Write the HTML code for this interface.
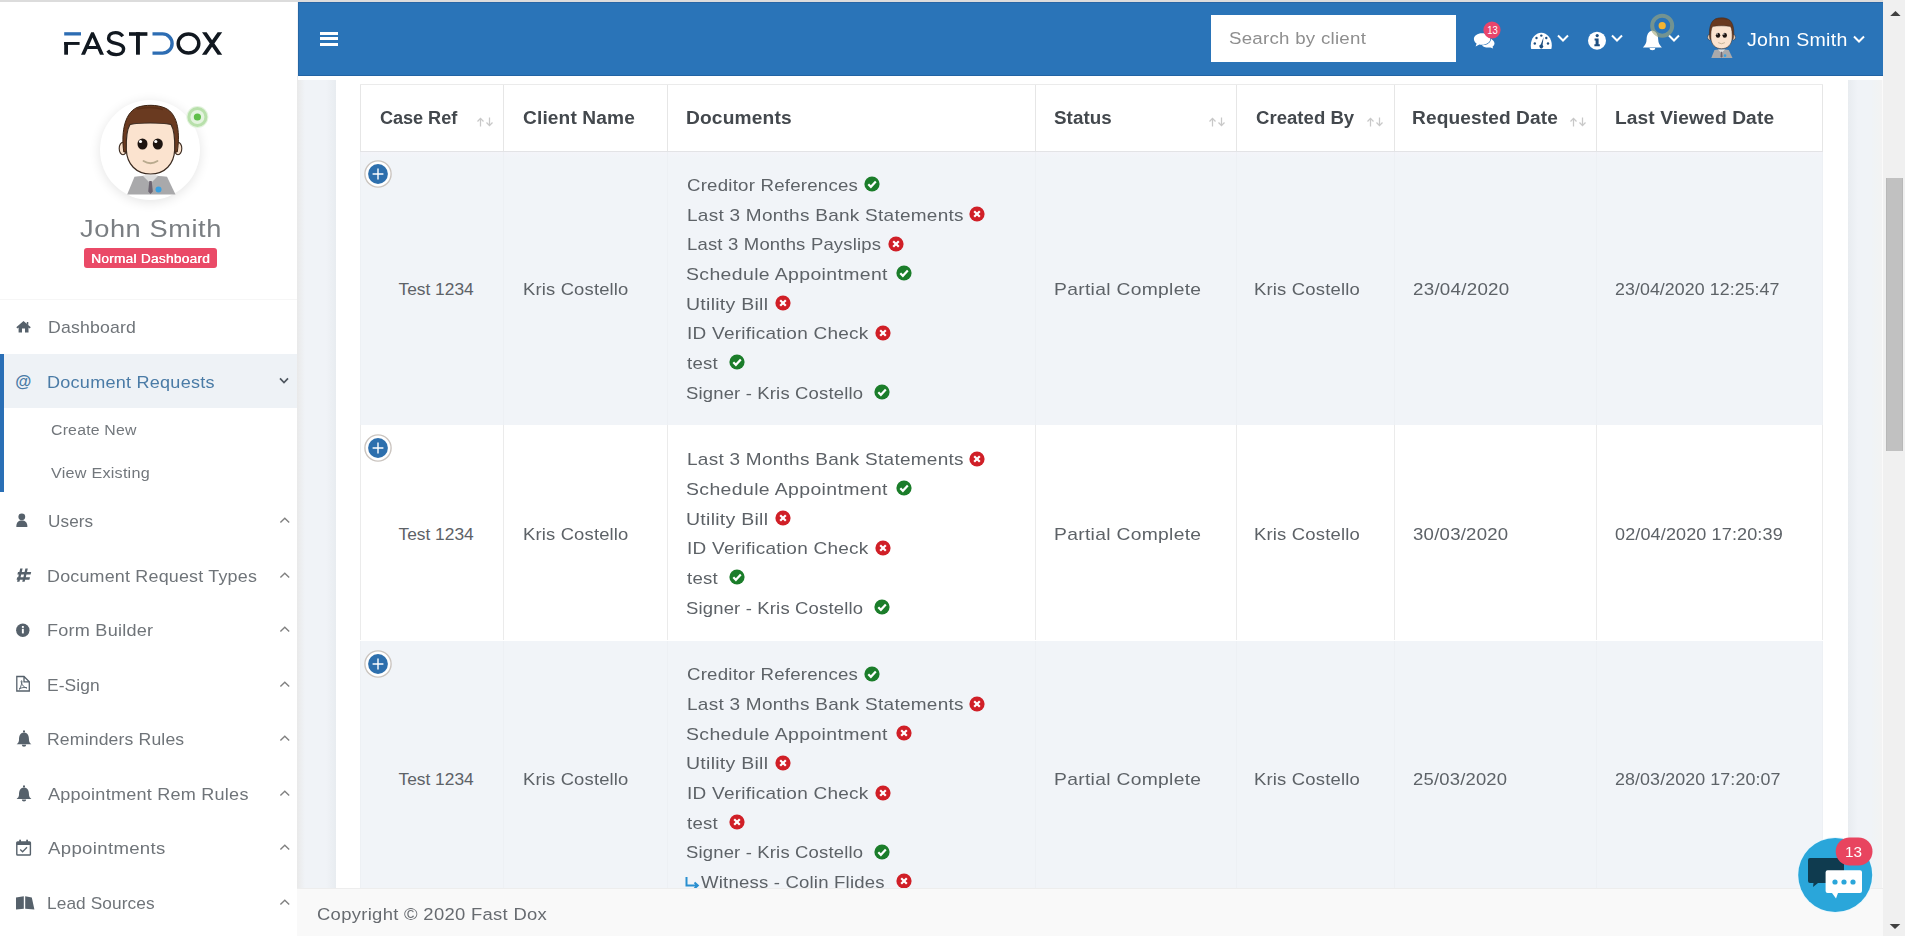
<!DOCTYPE html><html><head><meta charset="utf-8"><style>
*{margin:0;padding:0;box-sizing:border-box}
html,body{width:1905px;height:947px;overflow:hidden;background:#fff;font-family:"Liberation Sans",sans-serif}
.a{position:absolute}
.t{position:absolute;white-space:pre;line-height:20px;font-family:"Liberation Sans",sans-serif}
</style></head><body><div class="a" style="left:0;top:0;width:1905px;height:2px;background:#dcdcdc"></div><div class="a" style="left:297px;top:2px;width:1588px;height:933px;background:#f0f3f7"></div><div class="a" style="left:297px;top:76px;width:8px;height:812px;background:linear-gradient(to right,#e9e9e9,#f0f3f7)"></div><div class="a" style="left:326px;top:76px;width:10px;height:812px;background:linear-gradient(to right,#f0f3f7,#e8ecf0)"></div><div class="a" style="left:1848px;top:76px;width:10px;height:812px;background:linear-gradient(to left,#f0f3f7,#e8ecf0)"></div><div class="a" style="left:336px;top:76px;width:1512px;height:812px;background:#fff"></div><div class="a" style="left:0;top:2px;width:297px;height:945px;background:#fff"></div><div class="a" style="left:0;top:299px;width:297px;height:1px;background:#f6f6f6"></div><svg class="a" style="left:0;top:0" width="297" height="80" viewBox="0 0 297 80">
<rect x="64.2" y="32.2" width="16.8" height="3.3" fill="#2d6db3"/>
<rect x="64.2" y="42" width="15.4" height="2.9" fill="#111820"/>
<rect x="64.2" y="42" width="3.8" height="12.7" fill="#111820"/>
<path d="M81 54.7 L91.2 32.2 L93.8 32.2 L104 54.7 L100 54.7 L92.5 37.5 L85 54.7 Z" fill="#111820"/>
<rect x="86.5" y="46" width="12" height="3" fill="#111820"/>
<path d="M122.8 36.3 C121 33.8 118.4 32.6 115.6 32.6 C111.4 32.6 108.6 34.9 108.6 38.2 C108.6 45.2 123.6 41.6 123.6 49 C123.6 52.5 120.3 54.6 116.2 54.6 C112.4 54.6 109.4 53 107.8 50.5" fill="none" stroke="#111820" stroke-width="3.4"/>
<rect x="129" y="32.2" width="18.4" height="3.6" fill="#111820"/>
<rect x="136" y="32.2" width="3.9" height="22.5" fill="#111820"/>
<path d="M152.5 33.9 H162.5 A9.6 9.6 0 0 1 162.5 53.1 H152.5" fill="none" stroke="#2d6db3" stroke-width="3.4"/>
<ellipse cx="188.5" cy="43.5" rx="10.3" ry="9.6" fill="none" stroke="#111820" stroke-width="3.5"/>
<path d="M202 32.2 L206.6 32.2 L222.2 54.7 L217.6 54.7 Z M217.6 32.2 L222.2 32.2 L206.5 54.7 L201.9 54.7 Z" fill="#111820"/>
</svg><div class="a" style="left:100px;top:100px;width:100px;height:100px;border-radius:50%;background:#fff;box-shadow:0 2px 12px rgba(0,0,0,0.11)"></div><svg class="a" style="left:100px;top:95px" width="110" height="110" viewBox="100 95 110 110"><path d="M134.5 176.8 C140 176 145 175.8 150.5 175.8 C156 175.8 161 176 167 176.8 L175.5 194.5 L127.2 194.5 Z" fill="#a9a9ab"/>
<path d="M142.5 175.5 L150.5 183.5 L158.5 175.5 Z" fill="#dcdcdc"/>
<path d="M149.3 181 L151.7 181 L152.8 191.5 L150.5 194 L148.2 191.5 Z" fill="#6c6470"/>
<circle cx="158.5" cy="189.5" r="3" fill="#3aa0e0"/>
<ellipse cx="123" cy="148.5" rx="3.8" ry="6.2" fill="#f9e0ca" stroke="#3a2a20" stroke-width="1.1"/>
<ellipse cx="178" cy="148.5" rx="3.8" ry="6.2" fill="#f9e0ca" stroke="#3a2a20" stroke-width="1.1"/>
<path d="M123.8 152 C121.5 136 123 114 137 107.5 C145 104.5 157 104.5 165 108 C179 114 180 136 177.2 152 Z" fill="#6a3a20" stroke="#3a2212" stroke-width="1"/>
<path d="M126.3 150 C126 140 126.5 130 130 124.5 C140 122.5 160 122.5 171 124.5 C174.5 130 175 140 174.7 150 C174 164 165 174 150.5 174 C136 174 127 164 126.3 150 Z" fill="#fbe3cf" stroke="#3a2a20" stroke-width="1.2"/>
<path d="M137 109 C145 107 155 107 163 109.5" fill="none" stroke="#5a3018" stroke-width="1.5"/>
<ellipse cx="142.5" cy="144" rx="5" ry="5.6" fill="#1d1410"/>
<ellipse cx="157.8" cy="144" rx="5" ry="5.6" fill="#1d1410"/>
<circle cx="140.5" cy="141.5" r="1.6" fill="#fff"/>
<circle cx="155.8" cy="141.5" r="1.6" fill="#fff"/>
<path d="M143.5 161 Q150.5 165.5 157.5 161" fill="none" stroke="#b9aa8e" stroke-width="1.8" stroke-linecap="round"/>
<circle cx="197.4" cy="117" r="11" fill="#e4f3df"/>
<circle cx="197.4" cy="117" r="8.5" fill="none" stroke="#b8e0ab" stroke-width="3"/>
<circle cx="197.4" cy="117" r="3.6" fill="#5fbf4a"/>
</svg><div class="t" style="left:80.00px;top:218.62px;font-size:24.18px;letter-spacing:0.498px;color:#7a7e82;font-weight:normal;transform:scaleX(1.1268);transform-origin:0 0;">John Smith</div><div class="a" style="left:84px;top:248px;width:133px;height:20px;border-radius:3px;background:#ea4a67"></div><div class="t" style="left:90.90px;top:248.66px;font-size:12.52px;letter-spacing:0.206px;color:#fff;font-weight:normal;transform:scaleX(1.0977);transform-origin:0 0;text-shadow:0.35px 0 0 #fff">Normal Dashboard</div><div class="a" style="left:0;top:354px;width:297px;height:54px;background:#eef2f6"></div><div class="a" style="left:0;top:354px;width:4px;height:138px;background:#2a6fb6"></div><div class="t" style="left:47.75px;top:318.18px;font-size:16.78px;letter-spacing:0.172px;color:#6f7479;font-weight:normal;transform:scaleX(1.0540);transform-origin:0 0;">Dashboard</div><div class="t" style="left:47.02px;top:372.58px;font-size:16.78px;letter-spacing:0.225px;color:#4a7ba6;font-weight:normal;transform:scaleX(1.0772);transform-origin:0 0;">Document Requests</div><svg class="a" style="left:279px;top:376.7px" width="12" height="8" viewBox="0 0 12 8"><path d="M1 1.3 L5 5.5 L9 1.3" fill="none" stroke="#4f5760" stroke-width="1.7"/></svg><div class="t" style="left:47.78px;top:511.98px;font-size:16.78px;letter-spacing:0.080px;color:#6f7479;font-weight:normal;transform:scaleX(1.0230);transform-origin:0 0;">Users</div><svg class="a" style="left:279px;top:516.8px" width="12" height="7" viewBox="0 0 12 7"><path d="M1.4 5.5 L5.8 1.3 L10.2 5.5" fill="none" stroke="#808080" stroke-width="1.4"/></svg><div class="t" style="left:47.03px;top:566.68px;font-size:16.78px;letter-spacing:0.192px;color:#6f7479;font-weight:normal;transform:scaleX(1.0673);transform-origin:0 0;">Document Request Types</div><svg class="a" style="left:279px;top:571.5px" width="12" height="7" viewBox="0 0 12 7"><path d="M1.4 5.5 L5.8 1.3 L10.2 5.5" fill="none" stroke="#808080" stroke-width="1.4"/></svg><div class="t" style="left:47.22px;top:621.38px;font-size:16.78px;letter-spacing:0.211px;color:#6f7479;font-weight:normal;transform:scaleX(1.0788);transform-origin:0 0;">Form Builder</div><svg class="a" style="left:279px;top:626.2px" width="12" height="7" viewBox="0 0 12 7"><path d="M1.4 5.5 L5.8 1.3 L10.2 5.5" fill="none" stroke="#808080" stroke-width="1.4"/></svg><div class="t" style="left:47.26px;top:675.98px;font-size:16.78px;letter-spacing:0.116px;color:#6f7479;font-weight:normal;transform:scaleX(1.0368);transform-origin:0 0;">E-Sign</div><svg class="a" style="left:279px;top:680.8px" width="12" height="7" viewBox="0 0 12 7"><path d="M1.4 5.5 L5.8 1.3 L10.2 5.5" fill="none" stroke="#808080" stroke-width="1.4"/></svg><div class="t" style="left:47.25px;top:730.48px;font-size:16.78px;letter-spacing:0.145px;color:#6f7479;font-weight:normal;transform:scaleX(1.0501);transform-origin:0 0;">Reminders Rules</div><svg class="a" style="left:279px;top:735.3px" width="12" height="7" viewBox="0 0 12 7"><path d="M1.4 5.5 L5.8 1.3 L10.2 5.5" fill="none" stroke="#808080" stroke-width="1.4"/></svg><div class="t" style="left:48.30px;top:784.78px;font-size:16.78px;letter-spacing:0.217px;color:#6f7479;font-weight:normal;transform:scaleX(1.0772);transform-origin:0 0;">Appointment Rem Rules</div><svg class="a" style="left:279px;top:789.6px" width="12" height="7" viewBox="0 0 12 7"><path d="M1.4 5.5 L5.8 1.3 L10.2 5.5" fill="none" stroke="#808080" stroke-width="1.4"/></svg><div class="t" style="left:48.30px;top:839.08px;font-size:16.78px;letter-spacing:0.303px;color:#6f7479;font-weight:normal;transform:scaleX(1.1084);transform-origin:0 0;">Appointments</div><svg class="a" style="left:279px;top:843.9px" width="12" height="7" viewBox="0 0 12 7"><path d="M1.4 5.5 L5.8 1.3 L10.2 5.5" fill="none" stroke="#808080" stroke-width="1.4"/></svg><div class="t" style="left:47.27px;top:893.88px;font-size:16.78px;letter-spacing:0.091px;color:#6f7479;font-weight:normal;transform:scaleX(1.0303);transform-origin:0 0;">Lead Sources</div><svg class="a" style="left:279px;top:898.7px" width="12" height="7" viewBox="0 0 12 7"><path d="M1.4 5.5 L5.8 1.3 L10.2 5.5" fill="none" stroke="#808080" stroke-width="1.4"/></svg><div class="t" style="left:51.00px;top:420.17px;font-size:14.79px;letter-spacing:0.193px;color:#72777c;font-weight:normal;transform:scaleX(1.0711);transform-origin:0 0;">Create New</div><div class="t" style="left:51.00px;top:463.07px;font-size:14.79px;letter-spacing:0.209px;color:#72777c;font-weight:normal;transform:scaleX(1.0943);transform-origin:0 0;">View Existing</div><svg class="a" style="left:0;top:300px" width="40" height="647" viewBox="0 300 40 647">
<g fill="#56616b">
<path d="M23.5 321 L30.8 327.3 L29.6 328.6 L28.5 327.6 L28.5 332.4 L25 332.4 L25 328.5 L22 328.5 L22 332.4 L18.6 332.4 L18.6 327.6 L17.5 328.6 L16.3 327.3 Z M26.8 322 L28.3 322 L28.3 325 L26.8 323.7 Z"/>
<path d="M16.3 527 C16.3 522 18.5 520.5 21.8 520.5 C25.1 520.5 27.4 522 27.4 527 Z"/>
<ellipse cx="21.8" cy="516.8" rx="3.4" ry="3.4"/>
<path d="M20.2 568.5 L22.6 568.5 L21.8 572 L24.6 572 L25.4 568.5 L27.8 568.5 L27 572 L31.2 572 L30.6 574.6 L26.4 574.6 L25.8 577.2 L30 577.2 L29.4 579.8 L25.2 579.8 L24.6 581.7 L22.2 581.7 L22.8 579.8 L20 579.8 L19.4 581.7 L17 581.7 L17.6 579.8 L16.6 579.8 L17.2 577.2 L18.2 577.2 L18.8 574.6 L17.4 574.6 L18 572 L19.4 572 Z M21.2 574.6 L20.6 577.2 L23.4 577.2 L24 574.6 Z"/>
<circle cx="22.8" cy="630.2" r="6.7"/>
<path d="M24 732.6 C19.8 732.6 19 736.5 19 740 C19 742 18 743.2 16.6 744.3 L31.4 744.3 C30 743.2 29 742 29 740 C29 736.5 28.2 732.6 24 732.6 Z M23 730.6 L25 730.6 L25 733 L23 733 Z M21.8 744.8 L26.2 744.8 A2.2 2 0 0 1 21.8 744.8 Z"/>
<path d="M24 787.4 C19.8 787.4 19 791.3 19 794.8 C19 796.8 18 797.9 16.6 799 L31.4 799 C30 797.9 29 796.8 29 794.8 C29 791.3 28.2 787.4 24 787.4 Z M23 785.4 L25 785.4 L25 788 L23 788 Z M21.8 799.5 L26.2 799.5 A2.2 2 0 0 1 21.8 799.5 Z"/>
<path d="M16 897.5 L23.8 896.3 L23.8 908.8 L16 909.6 Z M25.2 896.3 L31.8 897.5 L34.4 909.6 L25.2 908.8 Z"/>
</g>
<g fill="#fff"><rect x="21.9" y="628.8" width="1.9" height="4.6"/><rect x="21.9" y="626" width="1.9" height="1.9"/></g>
<path d="M16.8 676.5 L24 676.5 L29.3 681.8 L29.3 691 L16.8 691 Z M24 676.5 L24 681.8 L29.3 681.8" fill="none" stroke="#56616b" stroke-width="1.3"/>
<path d="M19.5 689.5 C21 686 22 683 22 681.5 C22 680 20.8 680.5 21.2 682 C21.8 685 24 687.5 27 688 M19 689 C21.5 687.5 24.5 687 27 688" fill="none" stroke="#56616b" stroke-width="0.9"/>
<text x="15.2" y="386.8" font-family="Liberation Sans" font-size="16.5" font-weight="bold" fill="#4a7ba6">@</text>
<rect x="16.8" y="842" width="13.6" height="13" rx="0.8" fill="none" stroke="#56616b" stroke-width="1.4"/>
<rect x="16.8" y="842" width="13.6" height="3" fill="#56616b"/>
<rect x="19.2" y="839.7" width="1.8" height="3.4" fill="#56616b"/><rect x="26.2" y="839.7" width="1.8" height="3.4" fill="#56616b"/>
<path d="M20.2 849.5 L22.6 851.8 L27 847.3" fill="none" stroke="#56616b" stroke-width="1.3"/>
</svg><div class="a" style="left:298px;top:2px;width:1586px;height:74px;background:#2a74b8"></div><div class="a" style="left:298px;top:75px;width:1586px;height:1px;background:#2263a3"></div><div class="a" style="left:298px;top:2px;width:1586px;height:1px;background:#2866a6"></div><div class="a" style="left:298px;top:2px;width:1px;height:74px;background:#2666a4"></div><div class="a" style="left:298px;top:76px;width:1586px;height:4px;background:#fff"></div><div class="a" style="left:320px;top:31.5px;width:18px;height:3.4px;background:#fff"></div><div class="a" style="left:320px;top:37.1px;width:18px;height:3.4px;background:#fff"></div><div class="a" style="left:320px;top:42.6px;width:18px;height:3.4px;background:#fff"></div><div class="a" style="left:1211px;top:15px;width:245px;height:47px;background:#fff"></div><div class="t" style="left:1228.60px;top:28.89px;font-size:17.07px;letter-spacing:0.235px;color:#8e8e8e;font-weight:normal;transform:scaleX(1.0953);transform-origin:0 0;">Search by client</div><div class="t" style="left:1746.80px;top:29.54px;font-size:18.06px;letter-spacing:0.255px;color:#ffffff;font-weight:normal;transform:scaleX(1.0837);transform-origin:0 0;">John Smith</div><svg class="a" style="left:1555.8px;top:34.0px" width="14" height="9" viewBox="0 0 14 9"><path d="M2 1.5 L7 6.5 L12 1.5" fill="none" stroke="#fff" stroke-width="2"/></svg><svg class="a" style="left:1610.0px;top:34.0px" width="14" height="9" viewBox="0 0 14 9"><path d="M2 1.5 L7 6.5 L12 1.5" fill="none" stroke="#fff" stroke-width="2"/></svg><svg class="a" style="left:1667.3px;top:34.2px" width="14" height="9" viewBox="0 0 14 9"><path d="M2 1.5 L7 6.5 L12 1.5" fill="none" stroke="#fff" stroke-width="2"/></svg><svg class="a" style="left:1851.8px;top:34.9px" width="14" height="9" viewBox="0 0 14 9"><path d="M2 1.5 L7 6.5 L12 1.5" fill="none" stroke="#fff" stroke-width="2"/></svg><svg class="a" style="left:1460px;top:10px" width="240" height="50" viewBox="1460 10 240 50">
<path d="M1482 33.2 C1477.5 33.2 1473.9 35.8 1473.9 38.9 C1473.9 40.8 1475 42.4 1476.6 43.5 L1475.6 46.6 L1479.4 44.4 C1480.2 44.6 1481.1 44.7 1482 44.7 C1486.5 44.7 1490.3 42 1490.3 38.9 C1490.3 35.8 1486.5 33.2 1482 33.2 Z" fill="#fff"/>
<path d="M1491 38.8 C1491.9 39.6 1494.5 41.2 1494.5 43.3 C1494.5 44.7 1493.7 45.9 1492.5 46.7 L1493.2 48.6 L1490.4 47.4 C1489.7 47.6 1489 47.6 1488.3 47.6 C1485.4 47.6 1483 46.5 1481.8 45.2 C1486.4 45.6 1491.2 42.8 1491 38.8 Z" fill="#fff"/>
<circle cx="1492" cy="30" r="8.6" fill="#e9456b"/>
<text x="1492.6" y="33.6" text-anchor="middle" font-family="Liberation Sans" font-size="10.6" fill="#fff" transform="translate(1492.6 0) scale(0.9 1) translate(-1492.6 0)">13</text>
<path d="M1531.2 49 C1530.9 47.8 1530.8 46.6 1530.8 45.4 C1530.8 38.3 1535.5 32.7 1541.3 32.7 C1547.1 32.7 1551.8 38.3 1551.8 45.4 C1551.8 46.6 1551.6 47.8 1551.3 49 Z" fill="#fff"/>
<g fill="#1f4f80"><circle cx="1534.8" cy="43.5" r="1.2"/><circle cx="1536.5" cy="38" r="1.2"/><circle cx="1541.3" cy="35.6" r="1.2"/><circle cx="1546.3" cy="38" r="1.2"/><circle cx="1548" cy="43.5" r="1.2"/>
<path d="M1543.6 37 L1542.6 45 A1.9 1.9 0 1 1 1540.8 44.6 Z"/></g>
<circle cx="1597" cy="40.7" r="9" fill="#fff"/>
<g fill="#1f4f80"><circle cx="1597.2" cy="35.6" r="1.6"/><path d="M1594.6 38.6 L1598.6 38.6 L1598.6 44.2 L1599.8 44.2 L1599.8 46.2 L1594.4 46.2 L1594.4 44.2 L1595.6 44.2 L1595.6 40.4 L1594.6 40.4 Z"/></g>
<path d="M1652.4 30.4 C1648.4 31 1646.6 35 1646.6 39.5 C1646.6 43 1645 45.4 1642.9 47.4 L1661.9 47.4 C1659.8 45.4 1658.2 43 1658.2 39.5 C1658.2 35 1656.4 31 1652.4 30.4 Z M1649.6 48 L1655.2 48 A2.8 2.2 0 0 1 1649.6 48 Z" fill="#fff"/>
<filter id="rb"><feGaussianBlur stdDeviation="0.7"/></filter><circle cx="1662.2" cy="25.7" r="10" fill="none" stroke="#a3a878" stroke-width="4" opacity="0.6" filter="url(#rb)"/>
<circle cx="1662.2" cy="25.7" r="3.6" fill="#f2b431"/>
</svg><svg class="a" style="left:1700px;top:10px" width="45" height="55" viewBox="1700 10 45 55"><g transform="translate(1655.3,-29.6) scale(0.44,0.45)"><path d="M134.5 176.8 C140 176 145 175.8 150.5 175.8 C156 175.8 161 176 167 176.8 L175.5 194.5 L127.2 194.5 Z" fill="#a9a9ab"/>
<path d="M142.5 175.5 L150.5 183.5 L158.5 175.5 Z" fill="#dcdcdc"/>
<path d="M149.3 181 L151.7 181 L152.8 191.5 L150.5 194 L148.2 191.5 Z" fill="#6c6470"/>
<circle cx="158.5" cy="189.5" r="3" fill="#3aa0e0"/>
<ellipse cx="123" cy="148.5" rx="3.8" ry="6.2" fill="#f9e0ca" stroke="#3a2a20" stroke-width="1.1"/>
<ellipse cx="178" cy="148.5" rx="3.8" ry="6.2" fill="#f9e0ca" stroke="#3a2a20" stroke-width="1.1"/>
<path d="M123.8 152 C121.5 136 123 114 137 107.5 C145 104.5 157 104.5 165 108 C179 114 180 136 177.2 152 Z" fill="#6a3a20" stroke="#3a2212" stroke-width="1"/>
<path d="M126.3 150 C126 140 126.5 130 130 124.5 C140 122.5 160 122.5 171 124.5 C174.5 130 175 140 174.7 150 C174 164 165 174 150.5 174 C136 174 127 164 126.3 150 Z" fill="#fbe3cf" stroke="#3a2a20" stroke-width="1.2"/>
<path d="M137 109 C145 107 155 107 163 109.5" fill="none" stroke="#5a3018" stroke-width="1.5"/>
<ellipse cx="142.5" cy="144" rx="5" ry="5.6" fill="#1d1410"/>
<ellipse cx="157.8" cy="144" rx="5" ry="5.6" fill="#1d1410"/>
<circle cx="140.5" cy="141.5" r="1.6" fill="#fff"/>
<circle cx="155.8" cy="141.5" r="1.6" fill="#fff"/>
<path d="M143.5 161 Q150.5 165.5 157.5 161" fill="none" stroke="#b9aa8e" stroke-width="1.8" stroke-linecap="round"/></g></svg><div class="a" style="left:360px;top:84px;width:1463px;height:1px;background:#ebebeb"></div><div class="a" style="left:360px;top:151px;width:1463px;height:274.3px;background:#f1f4f8"></div><div class="a" style="left:360px;top:640.5px;width:1463px;height:274.3px;background:#f1f4f8"></div><div class="a" style="left:360px;top:151px;width:1463px;height:1px;background:#e3e3e6"></div><div class="a" style="left:360px;top:152px;width:1463px;height:6px;background:linear-gradient(#f4f4f9,#f1f4f8)"></div><div class="a" style="left:360.0px;top:85px;width:1px;height:66px;background:#e6e6e6"></div><div class="a" style="left:360.0px;top:152px;width:1px;height:273.3px;background:#edf0f4"></div><div class="a" style="left:360.0px;top:425.3px;width:1px;height:215.2px;background:#ebebeb"></div><div class="a" style="left:360.0px;top:640.5px;width:1px;height:248px;background:#edf0f4"></div><div class="a" style="left:503.0px;top:85px;width:1px;height:66px;background:#e6e6e6"></div><div class="a" style="left:503.0px;top:152px;width:1px;height:273.3px;background:#edf0f4"></div><div class="a" style="left:503.0px;top:425.3px;width:1px;height:215.2px;background:#ebebeb"></div><div class="a" style="left:503.0px;top:640.5px;width:1px;height:248px;background:#edf0f4"></div><div class="a" style="left:667.0px;top:85px;width:1px;height:66px;background:#e6e6e6"></div><div class="a" style="left:667.0px;top:152px;width:1px;height:273.3px;background:#edf0f4"></div><div class="a" style="left:667.0px;top:425.3px;width:1px;height:215.2px;background:#ebebeb"></div><div class="a" style="left:667.0px;top:640.5px;width:1px;height:248px;background:#edf0f4"></div><div class="a" style="left:1035.0px;top:85px;width:1px;height:66px;background:#e6e6e6"></div><div class="a" style="left:1035.0px;top:152px;width:1px;height:273.3px;background:#edf0f4"></div><div class="a" style="left:1035.0px;top:425.3px;width:1px;height:215.2px;background:#ebebeb"></div><div class="a" style="left:1035.0px;top:640.5px;width:1px;height:248px;background:#edf0f4"></div><div class="a" style="left:1235.5px;top:85px;width:1px;height:66px;background:#e6e6e6"></div><div class="a" style="left:1235.5px;top:152px;width:1px;height:273.3px;background:#edf0f4"></div><div class="a" style="left:1235.5px;top:425.3px;width:1px;height:215.2px;background:#ebebeb"></div><div class="a" style="left:1235.5px;top:640.5px;width:1px;height:248px;background:#edf0f4"></div><div class="a" style="left:1393.5px;top:85px;width:1px;height:66px;background:#e6e6e6"></div><div class="a" style="left:1393.5px;top:152px;width:1px;height:273.3px;background:#edf0f4"></div><div class="a" style="left:1393.5px;top:425.3px;width:1px;height:215.2px;background:#ebebeb"></div><div class="a" style="left:1393.5px;top:640.5px;width:1px;height:248px;background:#edf0f4"></div><div class="a" style="left:1596.0px;top:85px;width:1px;height:66px;background:#e6e6e6"></div><div class="a" style="left:1596.0px;top:152px;width:1px;height:273.3px;background:#edf0f4"></div><div class="a" style="left:1596.0px;top:425.3px;width:1px;height:215.2px;background:#ebebeb"></div><div class="a" style="left:1596.0px;top:640.5px;width:1px;height:248px;background:#edf0f4"></div><div class="a" style="left:1822.0px;top:85px;width:1px;height:66px;background:#e6e6e6"></div><div class="a" style="left:1822.0px;top:152px;width:1px;height:273.3px;background:#edf0f4"></div><div class="a" style="left:1822.0px;top:425.3px;width:1px;height:215.2px;background:#ebebeb"></div><div class="a" style="left:1822.0px;top:640.5px;width:1px;height:248px;background:#edf0f4"></div><div class="t" style="left:380.00px;top:107.59px;font-size:18.49px;letter-spacing:-0.069px;color:#43484d;font-weight:bold;transform:scaleX(0.9822);transform-origin:0 0;">Case Ref</div><div class="t" style="left:522.70px;top:107.59px;font-size:18.49px;letter-spacing:0.122px;color:#43484d;font-weight:bold;transform:scaleX(1.0355);transform-origin:0 0;">Client Name</div><div class="t" style="left:686.16px;top:107.59px;font-size:18.49px;letter-spacing:0.148px;color:#43484d;font-weight:bold;transform:scaleX(1.0370);transform-origin:0 0;">Documents</div><div class="t" style="left:1054.40px;top:107.59px;font-size:18.49px;letter-spacing:0.060px;color:#43484d;font-weight:bold;transform:scaleX(1.0164);transform-origin:0 0;">Status</div><div class="t" style="left:1255.50px;top:107.59px;font-size:18.49px;letter-spacing:0.016px;color:#43484d;font-weight:bold;transform:scaleX(1.0043);transform-origin:0 0;">Created By</div><div class="t" style="left:1412.27px;top:107.59px;font-size:18.49px;letter-spacing:0.113px;color:#43484d;font-weight:bold;transform:scaleX(1.0330);transform-origin:0 0;">Requested Date</div><div class="t" style="left:1614.66px;top:107.59px;font-size:18.49px;letter-spacing:0.117px;color:#43484d;font-weight:bold;transform:scaleX(1.0364);transform-origin:0 0;">Last Viewed Date</div><svg class="a" style="left:475.5px;top:117px" width="19" height="10" viewBox="0 0 19 10"><path d="M4.5 9.5 V1.5 M1.5 4.5 L4.5 1.3 L7.5 4.5 M13.5 0.5 V8.5 M10.5 5.5 L13.5 8.7 L16.5 5.5" fill="none" stroke="#c8c8c8" stroke-width="1.25"/></svg><svg class="a" style="left:1207.8px;top:117px" width="19" height="10" viewBox="0 0 19 10"><path d="M4.5 9.5 V1.5 M1.5 4.5 L4.5 1.3 L7.5 4.5 M13.5 0.5 V8.5 M10.5 5.5 L13.5 8.7 L16.5 5.5" fill="none" stroke="#c8c8c8" stroke-width="1.25"/></svg><svg class="a" style="left:1365.6px;top:117px" width="19" height="10" viewBox="0 0 19 10"><path d="M4.5 9.5 V1.5 M1.5 4.5 L4.5 1.3 L7.5 4.5 M13.5 0.5 V8.5 M10.5 5.5 L13.5 8.7 L16.5 5.5" fill="none" stroke="#c8c8c8" stroke-width="1.25"/></svg><svg class="a" style="left:1568.8px;top:117px" width="19" height="10" viewBox="0 0 19 10"><path d="M4.5 9.5 V1.5 M1.5 4.5 L4.5 1.3 L7.5 4.5 M13.5 0.5 V8.5 M10.5 5.5 L13.5 8.7 L16.5 5.5" fill="none" stroke="#c8c8c8" stroke-width="1.25"/></svg><svg class="a" style="left:363.4px;top:159.0px" width="30" height="30" viewBox="0 0 30 30"><circle cx="15" cy="15" r="13.1" fill="#fff" stroke="#cbc5c0" stroke-width="1.4"/><circle cx="15" cy="15" r="9.9" fill="#2d6fad"/><path d="M15 9.6 V20.4 M9.6 15 H20.4" stroke="#fff" stroke-width="1.4"/></svg><div class="t" style="left:398.50px;top:278.69px;font-size:17.35px;letter-spacing:-0.002px;color:#5d6267;font-weight:normal;">Test 1234</div><div class="t" style="left:522.84px;top:278.69px;font-size:17.35px;letter-spacing:0.155px;color:#5d6267;font-weight:normal;transform:scaleX(1.0619);transform-origin:0 0;">Kris Costello</div><div class="t" style="left:1053.99px;top:278.69px;font-size:17.35px;letter-spacing:0.280px;color:#5d6267;font-weight:normal;transform:scaleX(1.1105);transform-origin:0 0;">Partial Complete</div><div class="t" style="left:1254.43px;top:278.69px;font-size:17.35px;letter-spacing:0.162px;color:#5d6267;font-weight:normal;transform:scaleX(1.0650);transform-origin:0 0;">Kris Costello</div><div class="t" style="left:1412.60px;top:278.69px;font-size:17.35px;letter-spacing:0.240px;color:#5d6267;font-weight:normal;transform:scaleX(1.0813);transform-origin:0 0;">23/04/2020</div><div class="t" style="left:1615.20px;top:278.69px;font-size:17.35px;letter-spacing:0.072px;color:#5d6267;font-weight:normal;transform:scaleX(1.0251);transform-origin:0 0;">23/04/2020 12:25:47</div><div class="t" style="left:686.70px;top:174.99px;font-size:17.35px;letter-spacing:0.202px;color:#5d6267;font-weight:normal;transform:scaleX(1.0756);transform-origin:0 0;">Creditor References</div><svg class="a" style="left:864.0px;top:176.4px" width="16" height="16" viewBox="0 0 16 16"><circle cx="8" cy="8" r="7.6" fill="#1b7d2a"/><path d="M4.3 8.2 L6.9 10.8 L11.8 5.6" fill="none" stroke="#fff" stroke-width="2.2"/></svg><div class="t" style="left:686.51px;top:204.64px;font-size:17.35px;letter-spacing:0.250px;color:#5d6267;font-weight:normal;transform:scaleX(1.0937);transform-origin:0 0;">Last 3 Months Bank Statements</div><svg class="a" style="left:969.4px;top:206.1px" width="16" height="16" viewBox="0 0 16 16"><circle cx="8" cy="8" r="7.6" fill="#d01f27"/><path d="M5.2 5.2 L10.8 10.8 M10.8 5.2 L5.2 10.8" fill="none" stroke="#fff" stroke-width="2.2"/></svg><div class="t" style="left:686.53px;top:234.29px;font-size:17.35px;letter-spacing:0.175px;color:#5d6267;font-weight:normal;transform:scaleX(1.0660);transform-origin:0 0;">Last 3 Months Payslips</div><svg class="a" style="left:887.5px;top:235.7px" width="16" height="16" viewBox="0 0 16 16"><circle cx="8" cy="8" r="7.6" fill="#d01f27"/><path d="M5.2 5.2 L10.8 10.8 M10.8 5.2 L5.2 10.8" fill="none" stroke="#fff" stroke-width="2.2"/></svg><div class="t" style="left:686.30px;top:263.94px;font-size:17.35px;letter-spacing:0.330px;color:#5d6267;font-weight:normal;transform:scaleX(1.1206);transform-origin:0 0;">Schedule Appointment</div><svg class="a" style="left:895.7px;top:265.3px" width="16" height="16" viewBox="0 0 16 16"><circle cx="8" cy="8" r="7.6" fill="#1b7d2a"/><path d="M4.3 8.2 L6.9 10.8 L11.8 5.6" fill="none" stroke="#fff" stroke-width="2.2"/></svg><div class="t" style="left:686.48px;top:293.59px;font-size:17.35px;letter-spacing:0.231px;color:#5d6267;font-weight:normal;transform:scaleX(1.1250);transform-origin:0 0;">Utility Bill</div><svg class="a" style="left:774.6px;top:295.0px" width="16" height="16" viewBox="0 0 16 16"><circle cx="8" cy="8" r="7.6" fill="#d01f27"/><path d="M5.2 5.2 L10.8 10.8 M10.8 5.2 L5.2 10.8" fill="none" stroke="#fff" stroke-width="2.2"/></svg><div class="t" style="left:686.51px;top:323.24px;font-size:17.35px;letter-spacing:0.232px;color:#5d6267;font-weight:normal;transform:scaleX(1.0949);transform-origin:0 0;">ID Verification Check</div><svg class="a" style="left:874.8px;top:324.6px" width="16" height="16" viewBox="0 0 16 16"><circle cx="8" cy="8" r="7.6" fill="#d01f27"/><path d="M5.2 5.2 L10.8 10.8 M10.8 5.2 L5.2 10.8" fill="none" stroke="#fff" stroke-width="2.2"/></svg><div class="t" style="left:686.90px;top:352.89px;font-size:17.35px;letter-spacing:0.215px;color:#5d6267;font-weight:normal;transform:scaleX(1.0737);transform-origin:0 0;">test</div><svg class="a" style="left:728.6px;top:354.3px" width="16" height="16" viewBox="0 0 16 16"><circle cx="8" cy="8" r="7.6" fill="#1b7d2a"/><path d="M4.3 8.2 L6.9 10.8 L11.8 5.6" fill="none" stroke="#fff" stroke-width="2.2"/></svg><div class="t" style="left:686.30px;top:382.54px;font-size:17.35px;letter-spacing:0.157px;color:#5d6267;font-weight:normal;transform:scaleX(1.0650);transform-origin:0 0;">Signer - Kris Costello</div><svg class="a" style="left:874.0px;top:383.9px" width="16" height="16" viewBox="0 0 16 16"><circle cx="8" cy="8" r="7.6" fill="#1b7d2a"/><path d="M4.3 8.2 L6.9 10.8 L11.8 5.6" fill="none" stroke="#fff" stroke-width="2.2"/></svg><svg class="a" style="left:363.4px;top:433.3px" width="30" height="30" viewBox="0 0 30 30"><circle cx="15" cy="15" r="13.1" fill="#fff" stroke="#cbc5c0" stroke-width="1.4"/><circle cx="15" cy="15" r="9.9" fill="#2d6fad"/><path d="M15 9.6 V20.4 M9.6 15 H20.4" stroke="#fff" stroke-width="1.4"/></svg><div class="t" style="left:398.50px;top:524.19px;font-size:17.35px;letter-spacing:-0.002px;color:#5d6267;font-weight:normal;">Test 1234</div><div class="t" style="left:522.84px;top:524.19px;font-size:17.35px;letter-spacing:0.155px;color:#5d6267;font-weight:normal;transform:scaleX(1.0619);transform-origin:0 0;">Kris Costello</div><div class="t" style="left:1053.99px;top:524.19px;font-size:17.35px;letter-spacing:0.280px;color:#5d6267;font-weight:normal;transform:scaleX(1.1105);transform-origin:0 0;">Partial Complete</div><div class="t" style="left:1254.43px;top:524.19px;font-size:17.35px;letter-spacing:0.162px;color:#5d6267;font-weight:normal;transform:scaleX(1.0650);transform-origin:0 0;">Kris Costello</div><div class="t" style="left:1412.60px;top:524.19px;font-size:17.35px;letter-spacing:0.216px;color:#5d6267;font-weight:normal;transform:scaleX(1.0726);transform-origin:0 0;">30/03/2020</div><div class="t" style="left:1615.20px;top:524.19px;font-size:17.35px;letter-spacing:0.114px;color:#5d6267;font-weight:normal;transform:scaleX(1.0403);transform-origin:0 0;">02/04/2020 17:20:39</div><div class="t" style="left:686.51px;top:449.29px;font-size:17.35px;letter-spacing:0.250px;color:#5d6267;font-weight:normal;transform:scaleX(1.0937);transform-origin:0 0;">Last 3 Months Bank Statements</div><svg class="a" style="left:969.4px;top:450.7px" width="16" height="16" viewBox="0 0 16 16"><circle cx="8" cy="8" r="7.6" fill="#d01f27"/><path d="M5.2 5.2 L10.8 10.8 M10.8 5.2 L5.2 10.8" fill="none" stroke="#fff" stroke-width="2.2"/></svg><div class="t" style="left:686.30px;top:478.94px;font-size:17.35px;letter-spacing:0.330px;color:#5d6267;font-weight:normal;transform:scaleX(1.1206);transform-origin:0 0;">Schedule Appointment</div><svg class="a" style="left:895.7px;top:480.3px" width="16" height="16" viewBox="0 0 16 16"><circle cx="8" cy="8" r="7.6" fill="#1b7d2a"/><path d="M4.3 8.2 L6.9 10.8 L11.8 5.6" fill="none" stroke="#fff" stroke-width="2.2"/></svg><div class="t" style="left:686.48px;top:508.59px;font-size:17.35px;letter-spacing:0.231px;color:#5d6267;font-weight:normal;transform:scaleX(1.1250);transform-origin:0 0;">Utility Bill</div><svg class="a" style="left:774.6px;top:510.0px" width="16" height="16" viewBox="0 0 16 16"><circle cx="8" cy="8" r="7.6" fill="#d01f27"/><path d="M5.2 5.2 L10.8 10.8 M10.8 5.2 L5.2 10.8" fill="none" stroke="#fff" stroke-width="2.2"/></svg><div class="t" style="left:686.51px;top:538.24px;font-size:17.35px;letter-spacing:0.232px;color:#5d6267;font-weight:normal;transform:scaleX(1.0949);transform-origin:0 0;">ID Verification Check</div><svg class="a" style="left:874.8px;top:539.6px" width="16" height="16" viewBox="0 0 16 16"><circle cx="8" cy="8" r="7.6" fill="#d01f27"/><path d="M5.2 5.2 L10.8 10.8 M10.8 5.2 L5.2 10.8" fill="none" stroke="#fff" stroke-width="2.2"/></svg><div class="t" style="left:686.90px;top:567.89px;font-size:17.35px;letter-spacing:0.215px;color:#5d6267;font-weight:normal;transform:scaleX(1.0737);transform-origin:0 0;">test</div><svg class="a" style="left:728.6px;top:569.3px" width="16" height="16" viewBox="0 0 16 16"><circle cx="8" cy="8" r="7.6" fill="#1b7d2a"/><path d="M4.3 8.2 L6.9 10.8 L11.8 5.6" fill="none" stroke="#fff" stroke-width="2.2"/></svg><div class="t" style="left:686.30px;top:597.54px;font-size:17.35px;letter-spacing:0.157px;color:#5d6267;font-weight:normal;transform:scaleX(1.0650);transform-origin:0 0;">Signer - Kris Costello</div><svg class="a" style="left:874.0px;top:598.9px" width="16" height="16" viewBox="0 0 16 16"><circle cx="8" cy="8" r="7.6" fill="#1b7d2a"/><path d="M4.3 8.2 L6.9 10.8 L11.8 5.6" fill="none" stroke="#fff" stroke-width="2.2"/></svg><svg class="a" style="left:363.4px;top:648.5px" width="30" height="30" viewBox="0 0 30 30"><circle cx="15" cy="15" r="13.1" fill="#fff" stroke="#cbc5c0" stroke-width="1.4"/><circle cx="15" cy="15" r="9.9" fill="#2d6fad"/><path d="M15 9.6 V20.4 M9.6 15 H20.4" stroke="#fff" stroke-width="1.4"/></svg><div class="t" style="left:398.50px;top:769.19px;font-size:17.35px;letter-spacing:-0.002px;color:#5d6267;font-weight:normal;">Test 1234</div><div class="t" style="left:522.84px;top:769.19px;font-size:17.35px;letter-spacing:0.155px;color:#5d6267;font-weight:normal;transform:scaleX(1.0619);transform-origin:0 0;">Kris Costello</div><div class="t" style="left:1053.99px;top:769.19px;font-size:17.35px;letter-spacing:0.280px;color:#5d6267;font-weight:normal;transform:scaleX(1.1105);transform-origin:0 0;">Partial Complete</div><div class="t" style="left:1254.43px;top:769.19px;font-size:17.35px;letter-spacing:0.162px;color:#5d6267;font-weight:normal;transform:scaleX(1.0650);transform-origin:0 0;">Kris Costello</div><div class="t" style="left:1412.60px;top:769.19px;font-size:17.35px;letter-spacing:0.189px;color:#5d6267;font-weight:normal;transform:scaleX(1.0630);transform-origin:0 0;">25/03/2020</div><div class="t" style="left:1615.20px;top:769.19px;font-size:17.35px;letter-spacing:0.085px;color:#5d6267;font-weight:normal;transform:scaleX(1.0299);transform-origin:0 0;">28/03/2020 17:20:07</div><div class="t" style="left:686.70px;top:664.49px;font-size:17.35px;letter-spacing:0.202px;color:#5d6267;font-weight:normal;transform:scaleX(1.0756);transform-origin:0 0;">Creditor References</div><svg class="a" style="left:864.0px;top:665.9px" width="16" height="16" viewBox="0 0 16 16"><circle cx="8" cy="8" r="7.6" fill="#1b7d2a"/><path d="M4.3 8.2 L6.9 10.8 L11.8 5.6" fill="none" stroke="#fff" stroke-width="2.2"/></svg><div class="t" style="left:686.51px;top:694.14px;font-size:17.35px;letter-spacing:0.250px;color:#5d6267;font-weight:normal;transform:scaleX(1.0937);transform-origin:0 0;">Last 3 Months Bank Statements</div><svg class="a" style="left:969.4px;top:695.5px" width="16" height="16" viewBox="0 0 16 16"><circle cx="8" cy="8" r="7.6" fill="#d01f27"/><path d="M5.2 5.2 L10.8 10.8 M10.8 5.2 L5.2 10.8" fill="none" stroke="#fff" stroke-width="2.2"/></svg><div class="t" style="left:686.30px;top:723.79px;font-size:17.35px;letter-spacing:0.330px;color:#5d6267;font-weight:normal;transform:scaleX(1.1206);transform-origin:0 0;">Schedule Appointment</div><svg class="a" style="left:895.7px;top:725.2px" width="16" height="16" viewBox="0 0 16 16"><circle cx="8" cy="8" r="7.6" fill="#d01f27"/><path d="M5.2 5.2 L10.8 10.8 M10.8 5.2 L5.2 10.8" fill="none" stroke="#fff" stroke-width="2.2"/></svg><div class="t" style="left:686.48px;top:753.44px;font-size:17.35px;letter-spacing:0.231px;color:#5d6267;font-weight:normal;transform:scaleX(1.1250);transform-origin:0 0;">Utility Bill</div><svg class="a" style="left:774.6px;top:754.9px" width="16" height="16" viewBox="0 0 16 16"><circle cx="8" cy="8" r="7.6" fill="#d01f27"/><path d="M5.2 5.2 L10.8 10.8 M10.8 5.2 L5.2 10.8" fill="none" stroke="#fff" stroke-width="2.2"/></svg><div class="t" style="left:686.51px;top:783.09px;font-size:17.35px;letter-spacing:0.232px;color:#5d6267;font-weight:normal;transform:scaleX(1.0949);transform-origin:0 0;">ID Verification Check</div><svg class="a" style="left:874.8px;top:784.5px" width="16" height="16" viewBox="0 0 16 16"><circle cx="8" cy="8" r="7.6" fill="#d01f27"/><path d="M5.2 5.2 L10.8 10.8 M10.8 5.2 L5.2 10.8" fill="none" stroke="#fff" stroke-width="2.2"/></svg><div class="t" style="left:686.90px;top:812.74px;font-size:17.35px;letter-spacing:0.215px;color:#5d6267;font-weight:normal;transform:scaleX(1.0737);transform-origin:0 0;">test</div><svg class="a" style="left:728.6px;top:814.1px" width="16" height="16" viewBox="0 0 16 16"><circle cx="8" cy="8" r="7.6" fill="#d01f27"/><path d="M5.2 5.2 L10.8 10.8 M10.8 5.2 L5.2 10.8" fill="none" stroke="#fff" stroke-width="2.2"/></svg><div class="t" style="left:686.30px;top:842.39px;font-size:17.35px;letter-spacing:0.157px;color:#5d6267;font-weight:normal;transform:scaleX(1.0650);transform-origin:0 0;">Signer - Kris Costello</div><svg class="a" style="left:874.0px;top:843.8px" width="16" height="16" viewBox="0 0 16 16"><circle cx="8" cy="8" r="7.6" fill="#1b7d2a"/><path d="M4.3 8.2 L6.9 10.8 L11.8 5.6" fill="none" stroke="#fff" stroke-width="2.2"/></svg><div class="t" style="left:701.40px;top:872.04px;font-size:17.35px;letter-spacing:0.176px;color:#5d6267;font-weight:normal;transform:scaleX(1.0709);transform-origin:0 0;">Witness - Colin Flides</div><svg class="a" style="left:895.9px;top:873.4px" width="16" height="16" viewBox="0 0 16 16"><circle cx="8" cy="8" r="7.6" fill="#d01f27"/><path d="M5.2 5.2 L10.8 10.8 M10.8 5.2 L5.2 10.8" fill="none" stroke="#fff" stroke-width="2.2"/></svg><svg class="a" style="left:684px;top:875.5px" width="18" height="14" viewBox="0 0 18 14"><path d="M2.5 1 V9.5 H13.5 M10.5 6.5 L13.8 9.5 L10.5 12.5" fill="none" stroke="#2a8fd0" stroke-width="2"/></svg><div class="a" style="left:297px;top:888px;width:1588px;height:48px;background:#f9f9f9;border-top:1px solid #ededed"></div><div class="t" style="left:317.00px;top:904.83px;font-size:16.64px;letter-spacing:0.274px;color:#676b70;font-weight:normal;transform:scaleX(1.1085);transform-origin:0 0;">Copyright © 2020 Fast Dox</div><div class="a" style="left:1872px;top:80px;width:11px;height:808px;background:linear-gradient(to right,#f0f3f6,#f3f3f3)"></div><div class="a" style="left:1882px;top:80px;width:1px;height:808px;background:#fafafa"></div><div class="a" style="left:1883px;top:0;width:22px;height:936px;background:#f0f0f0"></div><div class="a" style="left:0;top:936px;width:1905px;height:11px;background:#fff"></div><div class="a" style="left:1886px;top:178px;width:17px;height:273px;background:#c1c1c1;box-shadow:inset 1px 0 0 #b8b8b8, inset -1px 0 0 #b8b8b8"></div><svg class="a" style="left:1885px;top:0" width="20" height="947" viewBox="0 0 20 947"><path d="M5.2 16 L10.5 11 L15.6 16 Z" fill="#404040"/><path d="M4.7 924 L15.3 924 L10 929 Z" fill="#404040"/></svg><svg class="a" style="left:1790px;top:830px" width="95" height="95" viewBox="1790 830 95 95">
<circle cx="1835.2" cy="875" r="38" fill="#e9f7fd"/>
<circle cx="1835.2" cy="875" r="37" fill="#2aa6da"/>
<path d="M1810 858 H1842 A2 2 0 0 1 1844 860 V881 A2 2 0 0 1 1842 883 H1818 L1813 887 L1813.5 883 H1810 A2 2 0 0 1 1808 881 V860 A2 2 0 0 1 1810 858 Z" fill="#0f3b4f"/>
<path d="M1827.6 870.3 H1860 A2 2 0 0 1 1862 872.3 V891 A2 2 0 0 1 1860 893 H1838 L1836 898.5 L1832 893 H1827.6 A2 2 0 0 1 1825.6 891 V872.3 A2 2 0 0 1 1827.6 870.3 Z" fill="#fff"/>
<circle cx="1835" cy="882" r="2.6" fill="#2aa6da"/><circle cx="1844" cy="882" r="2.6" fill="#2aa6da"/><circle cx="1853" cy="882" r="2.6" fill="#2aa6da"/>
<rect x="1835.7" y="837.4" width="36.8" height="28.2" rx="14.1" fill="#e8445f"/>
</svg><div class="t" style="left:1844.72px;top:841.53px;font-size:15.50px;letter-spacing:-0.081px;color:#ffffff;font-weight:normal;transform:scaleX(0.9846);transform-origin:0 0;">13</div></body></html>
